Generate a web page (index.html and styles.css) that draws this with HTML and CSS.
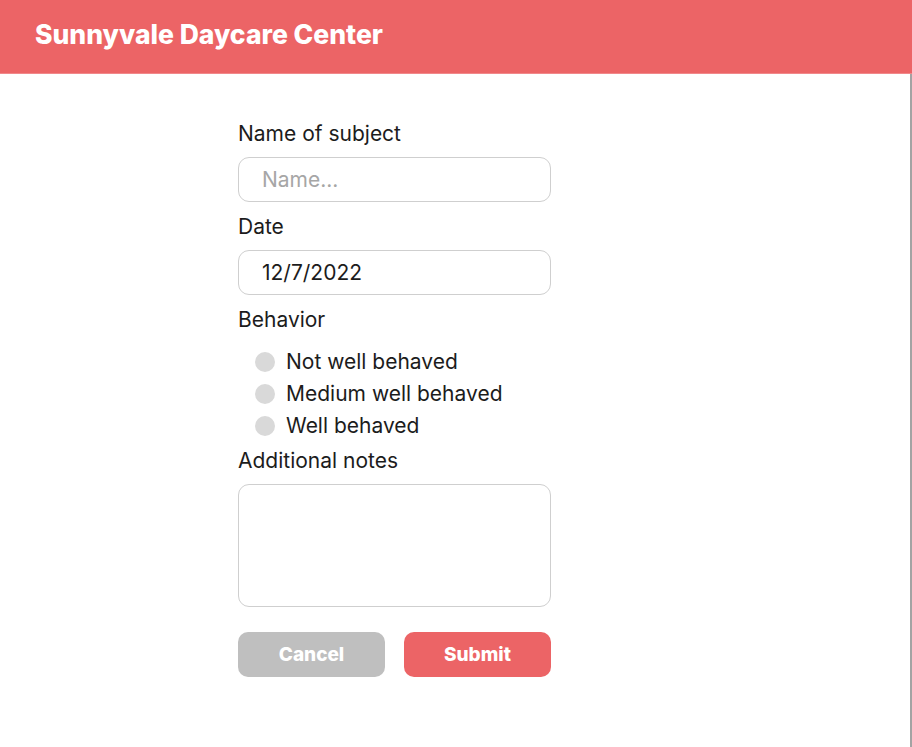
FILE: index.html
```html
<!DOCTYPE html>
<html lang="en">
<head>
<meta charset="utf-8">
<title>Sunnyvale Daycare Center</title>
<link rel="stylesheet" href="styles.css">
</head>
<body>
<header class="topbar">
  <h1 class="brand">Sunnyvale Daycare Center</h1>
</header>
<main class="page">
  <form class="form">
    <label class="label" for="name">Name of subject</label>
    <input class="field" id="name" type="text" placeholder="Name...">
    <label class="label" for="date">Date</label>
    <input class="field" id="date" type="text" value="12/7/2022">
    <div class="label">Behavior</div>
    <div class="radios">
      <label class="radio"><span class="dot"></span>Not well behaved</label>
      <label class="radio"><span class="dot"></span>Medium well behaved</label>
      <label class="radio"><span class="dot"></span>Well behaved</label>
    </div>
    <label class="label" for="notes">Additional notes</label>
    <textarea class="notes" id="notes"></textarea>
    <div class="actions">
      <button type="button" class="btn btn-cancel">Cancel</button>
      <button type="button" class="btn btn-submit">Submit</button>
    </div>
  </form>
</main>
</body>
</html>
```

FILE: styles.css
```css
html, body {
  margin: 0;
  padding: 0;
  background: #ffffff;
}
body {
  font-family: Inter, "Noto Sans", sans-serif;
  color: #1c1c1c;
}
.topbar {
  height: 73px;
  background: #ec6466;
  border-bottom: 1px solid #f1888a;
  display: flex;
  align-items: center;
  padding-left: 35px;
}
.brand {
  margin: 0;
  color: #ffffff;
  font-size: 26.5px;
  font-weight: 800;
  line-height: 30px;
  letter-spacing: 0;
  position: relative;
  top: -3px;
}
.page {
  height: 673px;
  border-right: 2px solid #a3a3a3;
  box-sizing: border-box;
  padding-top: 48px;
}
.form {
  width: 313px;
  margin-left: 238px;
  display: flex;
  flex-direction: column;
}
.label {
  font-size: 21px;
  line-height: 24px;
  margin-bottom: 11px;
  color: #1c1c1c;
}
.field {
  box-sizing: border-box;
  height: 45px;
  width: 313px;
  border: 1px solid #cfcfcf;
  border-radius: 11px;
  padding: 0 0 0 23px;
  font-family: Inter, "Noto Sans", sans-serif;
  font-size: 21px;
  color: #1c1c1c;
  margin: 0 0 13px 0;
  outline: none;
}
.field::placeholder {
  color: #a6a6a6;
}
.radios {
  display: flex;
  flex-direction: column;
  gap: 8px;
  padding-left: 17px;
  margin-top: 7px;
  margin-bottom: 11px;
}
.radio {
  display: flex;
  align-items: center;
  gap: 11px;
  height: 24px;
  font-size: 21px;
  line-height: 24px;
}
.dot {
  width: 20px;
  height: 20px;
  border-radius: 50%;
  background: #d9d9d9;
  flex: none;
}
.notes {
  box-sizing: border-box;
  width: 313px;
  height: 123px;
  border: 1px solid #cfcfcf;
  border-radius: 11px;
  resize: none;
  margin: 0;
  outline: none;
}
.actions {
  display: flex;
  gap: 19px;
  margin-top: 25px;
}
.btn {
  flex: 1;
  height: 45px;
  border: none;
  border-radius: 10px;
  color: #ffffff;
  font-family: Inter, "Noto Sans", sans-serif;
  font-size: 19px;
  font-weight: 800;
  padding: 0;
  line-height: 45px;
}
.btn-cancel {
  background: #bfbfbf;
}
.btn-submit {
  background: #ec6466;
}
```
